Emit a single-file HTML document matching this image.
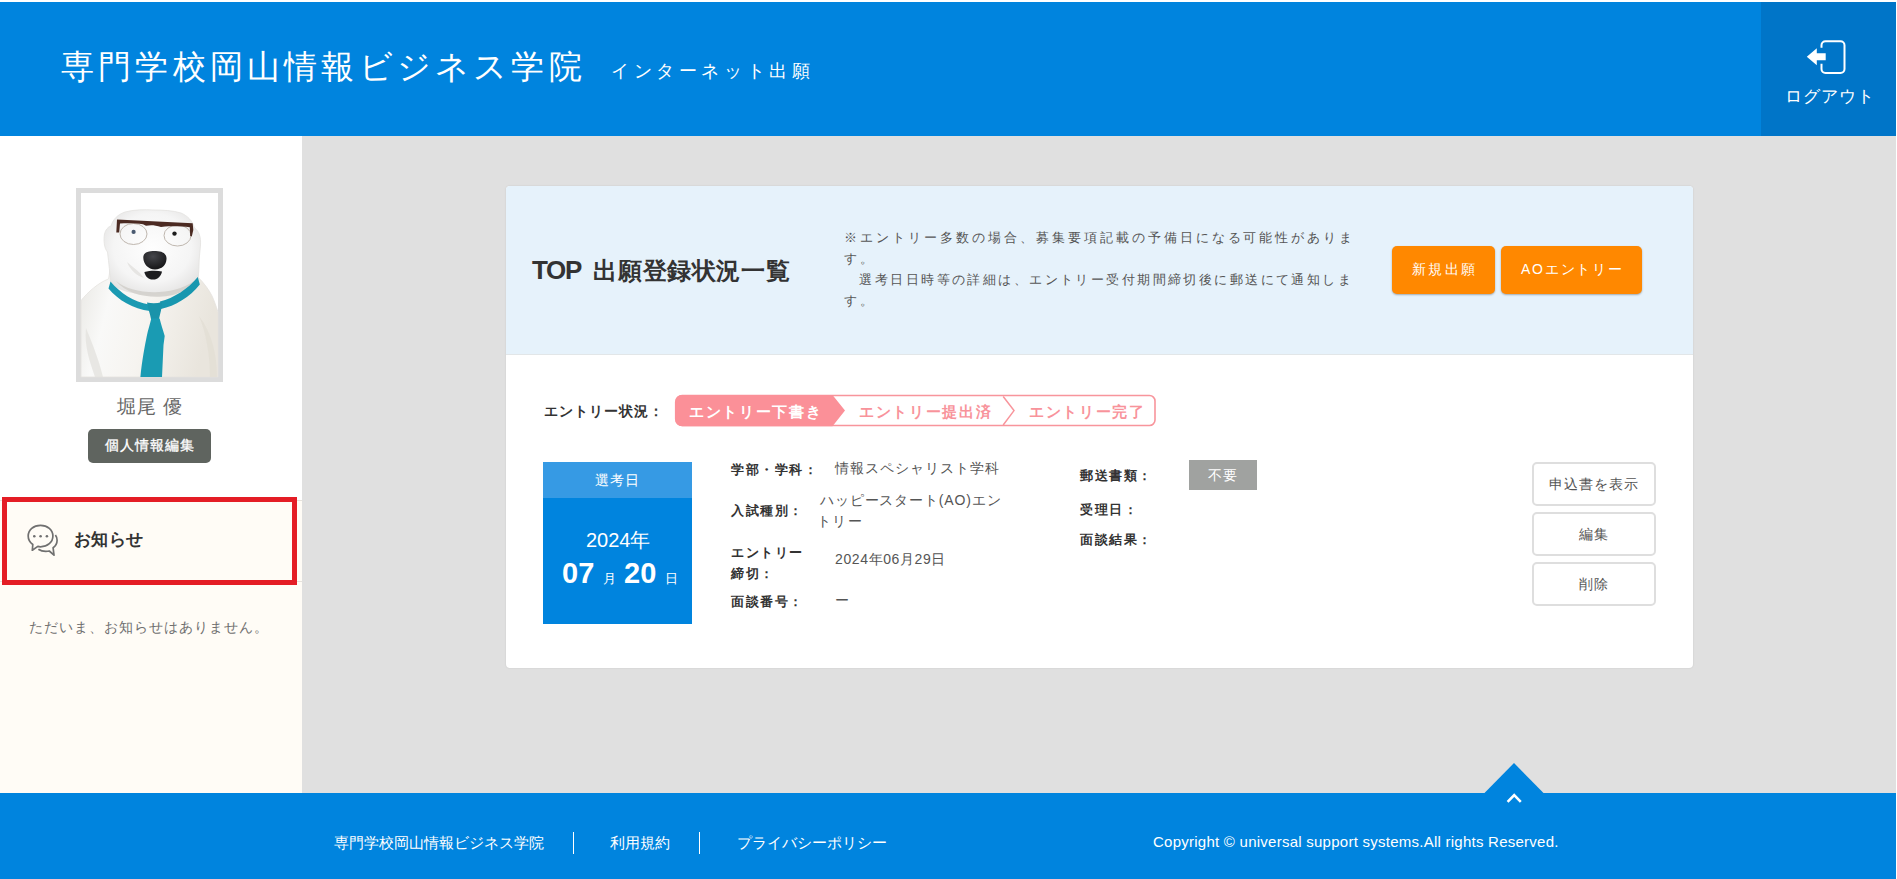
<!DOCTYPE html>
<html lang="ja">
<head>
<meta charset="utf-8">
<title>TOP 出願登録状況一覧</title>
<style>
*{box-sizing:border-box;margin:0;padding:0}
html,body{width:1897px;height:879px;overflow:hidden;background:#fff;font-family:"Liberation Sans",sans-serif;color:#333}
.abs{position:absolute;white-space:nowrap}
#header{position:absolute;left:0;top:2px;width:1896px;height:134px;background:#0084de}
#logout{position:absolute;left:1761px;top:0;width:135px;height:134px;background:#0075c8}
#side{position:absolute;left:0;top:136px;width:302px;height:657px;background:#fff}
#main{position:absolute;left:302px;top:136px;width:1594px;height:657px;background:#e0e0e0}
#footer{position:absolute;left:0;top:793px;width:1896px;height:86px;background:#0084de}
.card{position:absolute;left:506px;top:186px;width:1187px;height:482px;background:#fff;border-radius:4px;box-shadow:0 0 2px rgba(0,0,0,.12)}
.cardhead{position:absolute;left:0;top:0;width:1187px;height:169px;background:#e6f2fb;border-bottom:1px solid #e2e6e8;border-radius:4px 4px 0 0}
.obtn{position:absolute;top:60px;height:48px;background:#ff8800;color:#fff;border-radius:5px;box-shadow:0 1px 2px rgba(0,0,0,.3);font-size:14px;text-align:center;line-height:47px;letter-spacing:1px}
.wbtn{position:absolute;left:1026px;width:124px;height:44px;border:2px solid #dedede;border-radius:5px;background:#fff;color:#555;font-size:14px;text-align:center;line-height:40px;letter-spacing:1px}
.lbl{position:absolute;font-weight:bold;font-size:13px;color:#333;white-space:nowrap;letter-spacing:1.6px;line-height:20px}
.val{position:absolute;font-size:14px;color:#555;white-space:nowrap;letter-spacing:1px}
</style>
</head>
<body>
<div id="header">
  <div class="abs" style="left:61px;top:45px;font-size:33px;color:#fff;letter-spacing:4.2px;line-height:40px">専門学校岡山情報ビジネス学院</div>
  <div class="abs" style="left:611px;top:57px;font-size:18px;color:#fff;letter-spacing:4.6px;line-height:24px">インターネット出願</div>
  <div id="logout">
    <svg style="position:absolute;left:0;top:0" width="135" height="134" viewBox="0 0 135 134">
      <path d="M60.5 45.7 V43.2 a4 4 0 0 1 4 -4 H79.5 a4 4 0 0 1 4 4 V66.9 a4 4 0 0 1 -4 4 H64.5 a4 4 0 0 1 -4 -4 V61.7" fill="none" stroke="#fff" stroke-width="2"/>
      <path d="M45.8 54.7 L55.8 46.2 V51.2 H64.7 V58.2 H55.8 V63.2 Z" fill="#fff"/>
    </svg>
    <div class="abs" style="left:24px;top:84px;font-size:17px;color:#fff;letter-spacing:1px;line-height:22px">ログアウト</div>
  </div>
</div>

<div id="side">
  <div style="position:absolute;left:0;top:364px;width:302px;height:293px;background:#fffcf6;border-top:1px solid #e6e2dc"></div>
  <div style="position:absolute;left:0;top:445px;width:302px;height:1px;background:#e6e2dc"></div>
  <svg style="position:absolute;left:76px;top:52px" width="147" height="194" viewBox="76 188 147 194">
    <defs>
      <linearGradient id="furb" x1="0" y1="0" x2="1" y2="0.2">
        <stop offset="0" stop-color="#e9e8e4"/>
        <stop offset="0.25" stop-color="#f9f9f8"/>
        <stop offset="0.55" stop-color="#f6f4f0"/>
        <stop offset="1" stop-color="#e9e5dd"/>
      </linearGradient>
      <radialGradient id="headg" cx="0.5" cy="0.45" r="0.62">
        <stop offset="0" stop-color="#fefefe"/>
        <stop offset="0.65" stop-color="#f5f5f5"/>
        <stop offset="1" stop-color="#e2e1e0"/>
      </radialGradient>
      <radialGradient id="noseg" cx="0.42" cy="0.3" r="0.65">
        <stop offset="0" stop-color="#45464b"/>
        <stop offset="1" stop-color="#19191b"/>
      </radialGradient>
    </defs>
    <rect x="76" y="188" width="147" height="194" fill="#dcdcdc"/>
    <rect x="81" y="193" width="137" height="184" fill="#fff"/>
    <path d="M81,300.6 C88,292 98,283 108.6,278.9 L110,270 L197.8,270 L198.4,277.6 C204,283 209,290 211.8,295.5 C214,300 216,306 218,312 L218,377 L81,377 Z" fill="url(#furb)" stroke="#e4e2de" stroke-width="0.8"/>
    <path d="M86,328 C92,343 99,360 103,377 L95,377 C90,362 84,346 86,328 Z" fill="#e4e2de" opacity="0.8"/>
    <path d="M199,316 C206,333 210,355 210,377 L217,377 C217,355 212,333 199,316 Z" fill="#e2ded5" opacity="0.8"/>
    <path d="M111,226 C113,219 118,214.5 125,212 C134,209.5 145,209.5 153,210 C163,210 173,210.5 181,213 C188,216 192.5,221 194.5,228 C199,231 201,237 200.5,245 C200,252 199,258 199,265 C199,270 198.5,274 198,278 C186,297 128,300 110.5,283 C110,274 109,264 107.5,252 C104,248 103.5,240 104.5,234 C105.5,230 107.5,227 111,226 Z" fill="url(#headg)" stroke="#e3e2e0" stroke-width="0.8"/>
    <path d="M116,281 C132,295 172,297 194,281 C186,300 134,304 116,281 Z" fill="#d3d0cc" opacity="0.9"/>
    <path d="M127,262 C134,268 140,272 144,278 C137,276 130,270 127,262 Z" fill="#e6e5e3"/>
    <path d="M110.5,281.5 C120,293 134,302 149,304.5 L150,311 C133,309 118,300 108.5,288.5 Z" fill="#1b9ab2"/>
    <path d="M197.8,277 L199.8,284.5 C190,297 175,306 161,309 L160,301.5 C174,298 188,289 197.8,277 Z" fill="#1897af"/>
    <path d="M147,302.5 C152,303.5 157,303.5 162,302 C162,308 160,314 159,319 C156,321 153,321 151,319 C150,314 148,308 147,302.5 Z" fill="#1a93aa"/>
    <path d="M151.3,318.4 L159.6,318.4 C161,324 163,330 164.7,336 L163.5,345 L162,377 L140.4,377 C142,360 145,345 146.8,336 C148,330 150,324 151.3,318.4 Z" fill="#1a9bb3"/>
    <ellipse cx="133.5" cy="234" rx="13.5" ry="10.5" fill="none" stroke="#b0a69c" stroke-width="0.8"/>
    <ellipse cx="177.5" cy="235.5" rx="13.5" ry="10.5" fill="none" stroke="#b0a69c" stroke-width="0.8"/>
    <path d="M117,219.5 L192.7,223.3 L193.3,230 L191.8,236.4 L190.2,236 L189.8,227.2 C183,226.3 172,226 165,226.5 L161,227 C155,225 150,225 146,225.8 L143,224.3 C135,223 126,223 120,223.6 L119.2,232.4 L116.3,232.4 Z" fill="#4b2a22"/>
    <circle cx="133.6" cy="231.9" r="2.1" fill="#4a5a70"/>
    <circle cx="174.5" cy="233.6" r="2.2" fill="#1c1c1c"/>
    <path d="M143.3,258 C143,251.5 150,250.8 156,251 C163,251.3 166.8,254 166.5,259 C166.2,265 162,269.4 155,269.4 C148,269.4 143.6,264 143.3,258 Z" fill="url(#noseg)"/>
    <path d="M144.4,272 C150,270.5 157,270.5 162,271.5 C161,276 158,279.6 153,279.6 C148,279.6 145,276 144.4,272 Z" fill="#1d1d1f"/>
  </svg>
  <div class="abs" style="left:117px;top:259px;font-size:19px;color:#666;line-height:24px;letter-spacing:1px">堀尾 優</div>
  <div style="position:absolute;left:88px;top:293px;width:123px;height:34px;background:#5f645f;border-radius:5px;color:#fff;font-size:14px;text-align:center;line-height:32px;letter-spacing:1px;text-indent:1px;-webkit-text-stroke:0.3px #fff">個人情報編集</div>
  <svg style="position:absolute;left:26px;top:386px" width="34" height="34" viewBox="26 522 34 34">
    <path d="M40.5,525.3 C33.5,525.3 28.2,529.8 28.2,536 C28.2,539.5 30,542.5 32.8,544.5 L32.3,550.2 L37.8,546.4 C38.7,546.7 39.6,546.8 40.5,546.8 C47.5,546.8 52.9,542.2 52.9,536 C52.9,529.8 47.5,525.3 40.5,525.3 Z" fill="none" stroke="#707070" stroke-width="1.7" stroke-linejoin="round"/>
    <path d="M55.4,535 C56.5,536.5 57.1,538.3 57.1,540.2 C57.1,543.3 55.5,546 53.1,547.8 L54,555.2 L49.3,551 C48.2,551.3 47,551.4 45.8,551.4 C43,551.4 40.4,550.6 38.4,549.2" fill="none" stroke="#707070" stroke-width="1.7" stroke-linejoin="round"/>
    <circle cx="34.3" cy="536.3" r="1.3" fill="#707070"/>
    <circle cx="40.6" cy="536.3" r="1.3" fill="#707070"/>
    <circle cx="46.9" cy="536.3" r="1.3" fill="#707070"/>
  </svg>
  <div class="abs" style="left:74px;top:392px;font-size:17px;font-weight:bold;color:#333;line-height:24px;letter-spacing:0.3px">お知らせ</div>
  <div class="abs" style="left:29px;top:481px;font-size:14px;color:#707070;line-height:20px;letter-spacing:1px">ただいま、お知らせはありません。</div>
</div>
<div style="position:absolute;left:2px;top:497px;width:295px;height:88px;border:5px solid #e41d25"></div>
<div id="main">
</div>

<div class="card">
  <div class="cardhead">
    <div class="abs" style="left:26px;top:69px;font-weight:bold;color:#333;line-height:30px"><span style="font-size:26px;letter-spacing:-1.3px">TOP</span><span style="font-size:26px"> </span><span style="font-size:24px;letter-spacing:0.6px;margin-left:5px">出願登録状況一覧</span></div>
    <div class="abs" style="left:338px;top:41px;font-size:13px;color:#555;letter-spacing:2.98px;line-height:21px">※エントリー多数の場合、募集要項記載の予備日になる可能性がありま</div>
    <div class="abs" style="left:338px;top:62px;font-size:13px;color:#555;letter-spacing:3.3px;line-height:21px">す。</div>
    <div class="abs" style="left:338px;top:83px;font-size:13px;color:#555;letter-spacing:2.43px;line-height:21px">　選考日日時等の詳細は、エントリー受付期間締切後に郵送にて通知しま</div>
    <div class="abs" style="left:338px;top:104px;font-size:13px;color:#555;letter-spacing:3.3px;line-height:21px">す。</div>
    <div class="obtn" style="left:886px;width:103px;letter-spacing:2.4px;text-indent:2.4px">新規出願</div>
    <div class="obtn" style="left:995px;width:141px;letter-spacing:1.8px;text-indent:1.8px">AOエントリー</div>
  </div>
    <div class="abs" style="left:38px;top:215px;font-size:14px;font-weight:bold;color:#333;line-height:20px;letter-spacing:1px">エントリー状況：</div>
    <svg style="position:absolute;left:168px;top:208px" width="482" height="33" viewBox="674 394 482 33">
      <path d="M682.2,395.5 H1149.5 a5.5 5.5 0 0 1 5.5 5.5 V420 a5.5 5.5 0 0 1 -5.5 5.5 H682.2 a6.5 6.5 0 0 1 -6.5 -6.5 V402 a6.5 6.5 0 0 1 6.5 -6.5 Z" fill="#fff" stroke="#f8959c" stroke-width="1.6"/>
      <path d="M682.2,395 H832.5 L845,410.5 L832.5,426.3 H682.2 a7 7 0 0 1 -7 -7 V402 a7 7 0 0 1 7 -7 Z" fill="#fb9098"/>
      <path d="M1003.2,396.5 L1014,410.6 L1003.2,425" fill="none" stroke="#f8959c" stroke-width="1.5"/>
    </svg>
    <div class="abs" style="left:183px;top:215px;font-size:15px;font-weight:bold;color:#fff;line-height:22px;letter-spacing:1.7px">エントリー下書き</div>
    <div class="abs" style="left:353px;top:215px;font-size:15px;font-weight:bold;color:#f8939b;line-height:22px;letter-spacing:1.7px">エントリー提出済</div>
    <div class="abs" style="left:523px;top:215px;font-size:15px;font-weight:bold;color:#f8939b;line-height:22px;letter-spacing:1.7px">エントリー完了</div>
    <div style="position:absolute;left:37px;top:276px;width:149px;height:162px;background:#0084de">
      <div style="height:36px;background:#369ae4;color:#fff;font-size:14px;text-align:center;line-height:36px;letter-spacing:1px">選考日</div>
      <div class="abs" style="left:43px;top:66px;font-size:20px;color:#fff;line-height:24px">2024年</div>
      <div class="abs" style="left:19px;top:94px;color:#fff;line-height:34px;font-size:29px;font-weight:bold">07</div>
      <div class="abs" style="left:60px;top:110px;color:#fff;line-height:14px;font-size:13px">月</div>
      <div class="abs" style="left:81px;top:94px;color:#fff;line-height:34px;font-size:29px;font-weight:bold">20</div>
      <div class="abs" style="left:122px;top:110px;color:#fff;line-height:14px;font-size:13px">日</div>
    </div>
    <div class="lbl" style="left:225px;top:274px">学部・学科：</div>
    <div class="val" style="left:329px;top:274px">情報スペシャリスト学科</div>
    <div class="lbl" style="left:225px;top:315px">入試種別：</div>
    <div class="val" style="left:314px;top:304px;line-height:21px;letter-spacing:0.85px">ハッピースタート(AO)エン</div><div class="val" style="left:311px;top:325px;line-height:21px;letter-spacing:1.3px">トリー</div>
    <div class="lbl" style="left:225px;top:356px;line-height:21px">エントリー<br>締切：</div>
    <div class="val" style="left:329px;top:365px;letter-spacing:0.6px">2024年06月29日</div>
    <div class="lbl" style="left:225px;top:406px">面談番号：</div>
    <div class="val" style="left:329px;top:406px">ー</div>
    <div class="lbl" style="left:574px;top:280px">郵送書類：</div>
    <div class="lbl" style="left:574px;top:314px">受理日：</div>
    <div class="lbl" style="left:574px;top:344px">面談結果：</div>
    <div style="position:absolute;left:683px;top:274px;width:68px;height:30px;background:#a0a2a0;color:#fff;font-size:14px;text-align:center;line-height:30px;letter-spacing:1px">不要</div>
    <div class="wbtn" style="top:276px">申込書を表示</div>
    <div class="wbtn" style="top:326px">編集</div>
    <div class="wbtn" style="top:376px">削除</div>
</div>

<svg style="position:absolute;left:1483px;top:762px" width="62" height="32" viewBox="1483 762 62 32"><path d="M1483.5,794 L1514,763 L1544.5,794 Z" fill="#0084de"/></svg>
<div id="footer">
  <svg style="position:absolute;left:1504px;top:0" width="20" height="16" viewBox="1504 793 20 16"><path d="M1507.6,801.8 L1514.2,795.2 L1520.8,801.8" fill="none" stroke="#fff" stroke-width="2.6"/></svg>
  <div class="abs" style="left:334px;top:40px;font-size:15px;color:#fff;line-height:20px">専門学校岡山情報ビジネス学院</div>
  <div style="position:absolute;left:573px;top:39px;width:1px;height:22px;background:#fff"></div>
  <div class="abs" style="left:610px;top:40px;font-size:15px;color:#fff;line-height:20px">利用規約</div>
  <div style="position:absolute;left:699px;top:39px;width:1px;height:22px;background:#fff"></div>
  <div class="abs" style="left:737px;top:40px;font-size:15px;color:#fff;line-height:20px">プライバシーポリシー</div>
  <div class="abs" style="left:1153px;top:39px;font-size:15px;color:#fff;line-height:20px;letter-spacing:0.25px">Copyright © universal support systems.All rights Reserved.</div>
</div>
</body>
</html>
